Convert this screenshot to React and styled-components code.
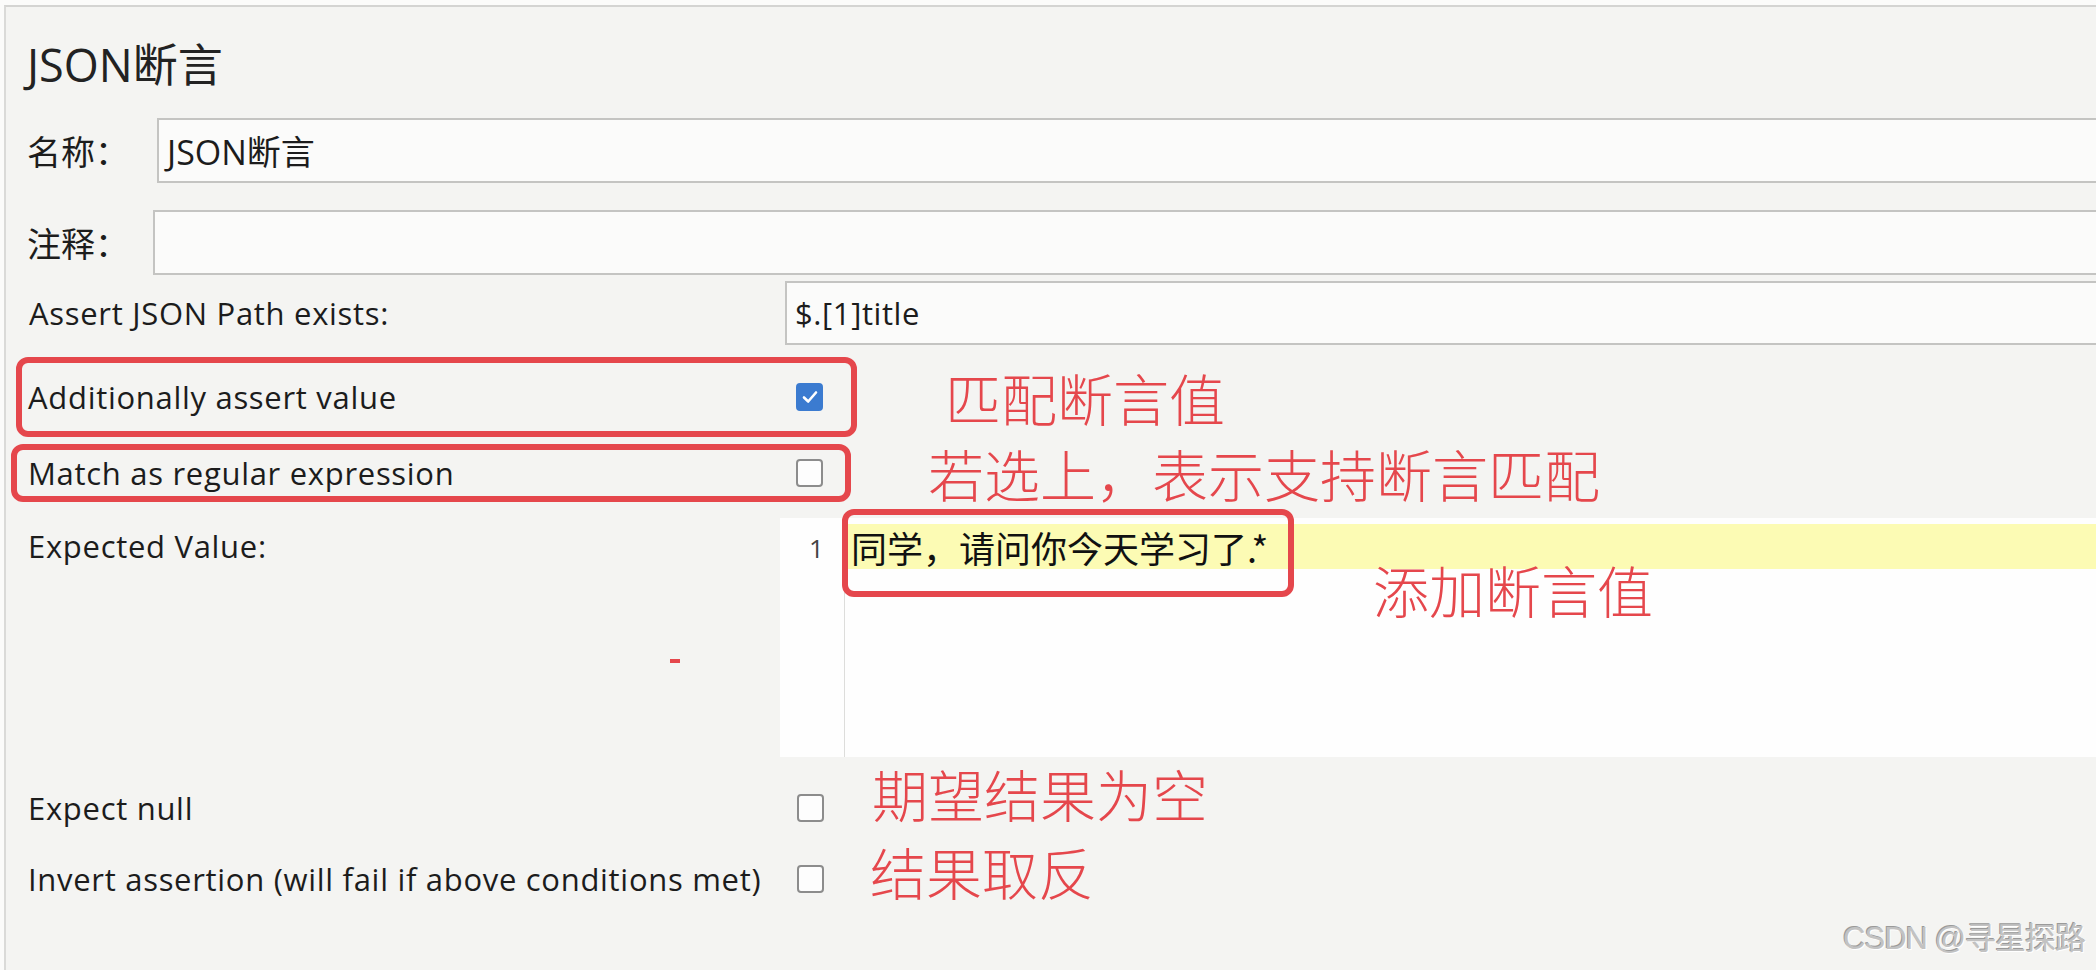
import React from "react";
import styled, { createGlobalStyle } from "styled-components";

const GlobalStyle = createGlobalStyle`
  html, body {
    margin: 0;
    padding: 0;
    background: #fbfbfa;
  }
  body {
    font-family: "Open Sans", "Noto Sans CJK SC", sans-serif;
    color: #1c1c1c;
  }
`;

const RED = "#e5474c";

const Page = styled.div`
  position: relative;
  width: 2096px;
  height: 970px;
  overflow: hidden;
  box-sizing: border-box;
  padding: 5px 0 0 4px;
  background: #fbfbfa;
`;

const Panel = styled.div`
  height: 100%;
  display: flex;
  flex-direction: column;
  border-top: 2px solid #d4d4d2;
  border-left: 2px solid #dadad8;
  background: #f4f4f2;
`;

const Title = styled.div`
  height: 111px;
  display: flex;
  align-items: center;
  padding-left: 21px;
  font-size: 45px;
  color: #222;
`;

const FieldRow = styled.div`
  display: flex;
  align-items: center;
  height: ${(p) => p.h || 65}px;
  margin-top: ${(p) => p.mt || 0}px;
`;

const Label = styled.div`
  flex: 0 0 ${(p) => p.w}px;
  box-sizing: border-box;
  padding-left: ${(p) => p.pl || 21}px;
  font-size: ${(p) => (p.cjk ? 34 : 31)}px;
  letter-spacing: ${(p) => (p.cjk ? 0 : 0.7)}px;
  white-space: nowrap;
`;

const TextInput = styled.div`
  flex: 1;
  align-self: stretch;
  display: flex;
  align-items: center;
  padding-left: 8px;
  border: 2px solid #c4c4c2;
  border-right: none;
  background: #fbfbfa;
  font-size: ${(p) => (p.cjk ? 34 : 31)}px;
  letter-spacing: ${(p) => (p.cjk ? 0 : 0.6)}px;
`;

const CheckRow = styled.div`
  display: flex;
  align-items: center;
  margin-top: ${(p) => p.mt}px;
  height: ${(p) => p.h}px;
  margin-left: ${(p) => p.ml}px;
`;

const Marked = styled.div`
  display: flex;
  align-items: center;
  box-sizing: border-box;
  width: ${(p) => p.w}px;
  height: 100%;
  padding-left: ${(p) => p.pl}px;
  padding-right: ${(p) => p.pr}px;
  border: 6px solid ${RED};
  border-radius: 12px;
`;

const RowText = styled.span`
  flex: 1;
  font-size: 31px;
  letter-spacing: 0.7px;
  white-space: nowrap;
`;

const Box = styled.span`
  flex: 0 0 auto;
  width: 27px;
  height: 28px;
  margin-left: ${(p) => p.ml || 0}px;
  box-sizing: border-box;
  border-radius: 4px;
  display: flex;
  align-items: center;
  justify-content: center;
  background: ${(p) => (p.checked ? "#3b7bd0" : "#fdfdfd")};
  border: 2px solid ${(p) => (p.checked ? "#3b7bd0" : "#8c8c8c")};
`;

const Note = styled.span`
  margin-left: ${(p) => p.ml}px;
  margin-top: ${(p) => p.mt || 0}px;
  font-family: "Noto Sans CJK SC", sans-serif;
  font-size: 56px;
  line-height: 1;
  font-weight: 300;
  color: ${RED};
  white-space: nowrap;
`;

const EditorRow = styled.div`
  display: flex;
  margin-top: 16px;
  height: 239px;
`;

const EditorLabel = styled.div`
  flex: 0 0 774px;
  box-sizing: border-box;
  padding: 7px 0 0 22px;
  display: flex;
  flex-direction: column;
  font-size: 31px;
  letter-spacing: 0.7px;
`;

const Dash = styled.span`
  width: 10px;
  height: 4px;
  margin: 92px 0 0 642px;
  background: ${RED};
`;

const Editor = styled.div`
  flex: 1;
  display: flex;
  position: relative;
  background: #fefefe;
`;

const Gutter = styled.div`
  flex: 0 0 65px;
  box-sizing: border-box;
  padding: 12px 0 0 29px;
  border-right: 1px solid #dddddb;
  font-size: 26px;
  color: #444;
`;

const Code = styled.div`
  flex: 1;
  display: flex;
  flex-direction: column;
`;

const CodeLine = styled.div`
  margin-top: 6px;
  height: 45px;
  padding-left: 6px;
  display: flex;
  align-items: center;
  background: #fcfbb4;
  font-family: "Noto Sans CJK SC", sans-serif;
  font-size: 36px;
  color: #111;
`;

const Frame = styled.span`
  position: absolute;
  left: 62px;
  top: -9px;
  width: 452px;
  height: 88px;
  box-sizing: border-box;
  border: 6px solid ${RED};
  border-radius: 12px;
`;

const PlainRow = styled.div`
  display: flex;
  align-items: center;
  height: 60px;
  margin-top: ${(p) => p.mt}px;
`;

const Watermark = styled.span`
  position: absolute;
  right: 11px;
  bottom: 12px;
  font-family: "Liberation Sans", "Noto Sans CJK SC", sans-serif;
  font-size: 31px;
  color: #c2c2c2;
  text-shadow: 1px 1px 0 #ffffff, -1px -1px 0 #9a9a9a;
  letter-spacing: -1px;
`;

function Check({ checked, ml }) {
  return (
    <Box checked={checked} ml={ml}>
      {checked && (
        <svg width="18" height="18" viewBox="0 0 18 18">
          <path d="M3 9.5 L7.2 13.5 L15 4.5" fill="none" stroke="#fff" strokeWidth="2.6" strokeLinecap="round" strokeLinejoin="round" />
        </svg>
      )}
    </Box>
  );
}

export default function App() {
  return (
    <Page>
      <GlobalStyle />
      <Panel>
        <Title>JSON断言</Title>

        <FieldRow>
          <Label w={151} cjk>名称：</Label>
          <TextInput cjk>JSON断言</TextInput>
        </FieldRow>

        <FieldRow mt={27}>
          <Label w={147} cjk>注释：</Label>
          <TextInput />
        </FieldRow>

        <FieldRow mt={6} h={64}>
          <Label w={779} pl={23}>Assert JSON Path exists:</Label>
          <TextInput>$.[1]title</TextInput>
        </FieldRow>

        <CheckRow mt={12} h={80} ml={10}>
          <Marked w={841} pl={6} pr={28}>
            <RowText>Additionally assert value</RowText>
            <Check checked />
          </Marked>
          <Note ml={88}>匹配断言值</Note>
        </CheckRow>

        <CheckRow mt={7} h={58} ml={5}>
          <Marked w={840} pl={11} pr={22}>
            <RowText>Match as regular expression</RowText>
            <Check />
          </Marked>
          <Note ml={77}>若选上，表示支持断言匹配</Note>
        </CheckRow>

        <EditorRow>
          <EditorLabel>
            Expected Value:
            <Dash />
          </EditorLabel>
          <Editor>
            <Gutter>1</Gutter>
            <Code>
              <CodeLine>同学，请问你今天学习了.*</CodeLine>
              <Note ml={528} mt={-8}>添加断言值</Note>
            </Code>
            <Frame />
          </Editor>
        </EditorRow>

        <PlainRow mt={21}>
          <Label w={774} pl={22}>Expect null</Label>
          <Check ml={17} />
          <Note ml={48} mt={-31}>期望结果为空</Note>
        </PlainRow>

        <PlainRow mt={11}>
          <Label w={774} pl={22}>Invert assertion (will fail if above conditions met)</Label>
          <Check ml={17} />
          <Note ml={46} mt={-16}>结果取反</Note>
        </PlainRow>
      </Panel>
      <Watermark>CSDN @寻星探路</Watermark>
    </Page>
  );
}
